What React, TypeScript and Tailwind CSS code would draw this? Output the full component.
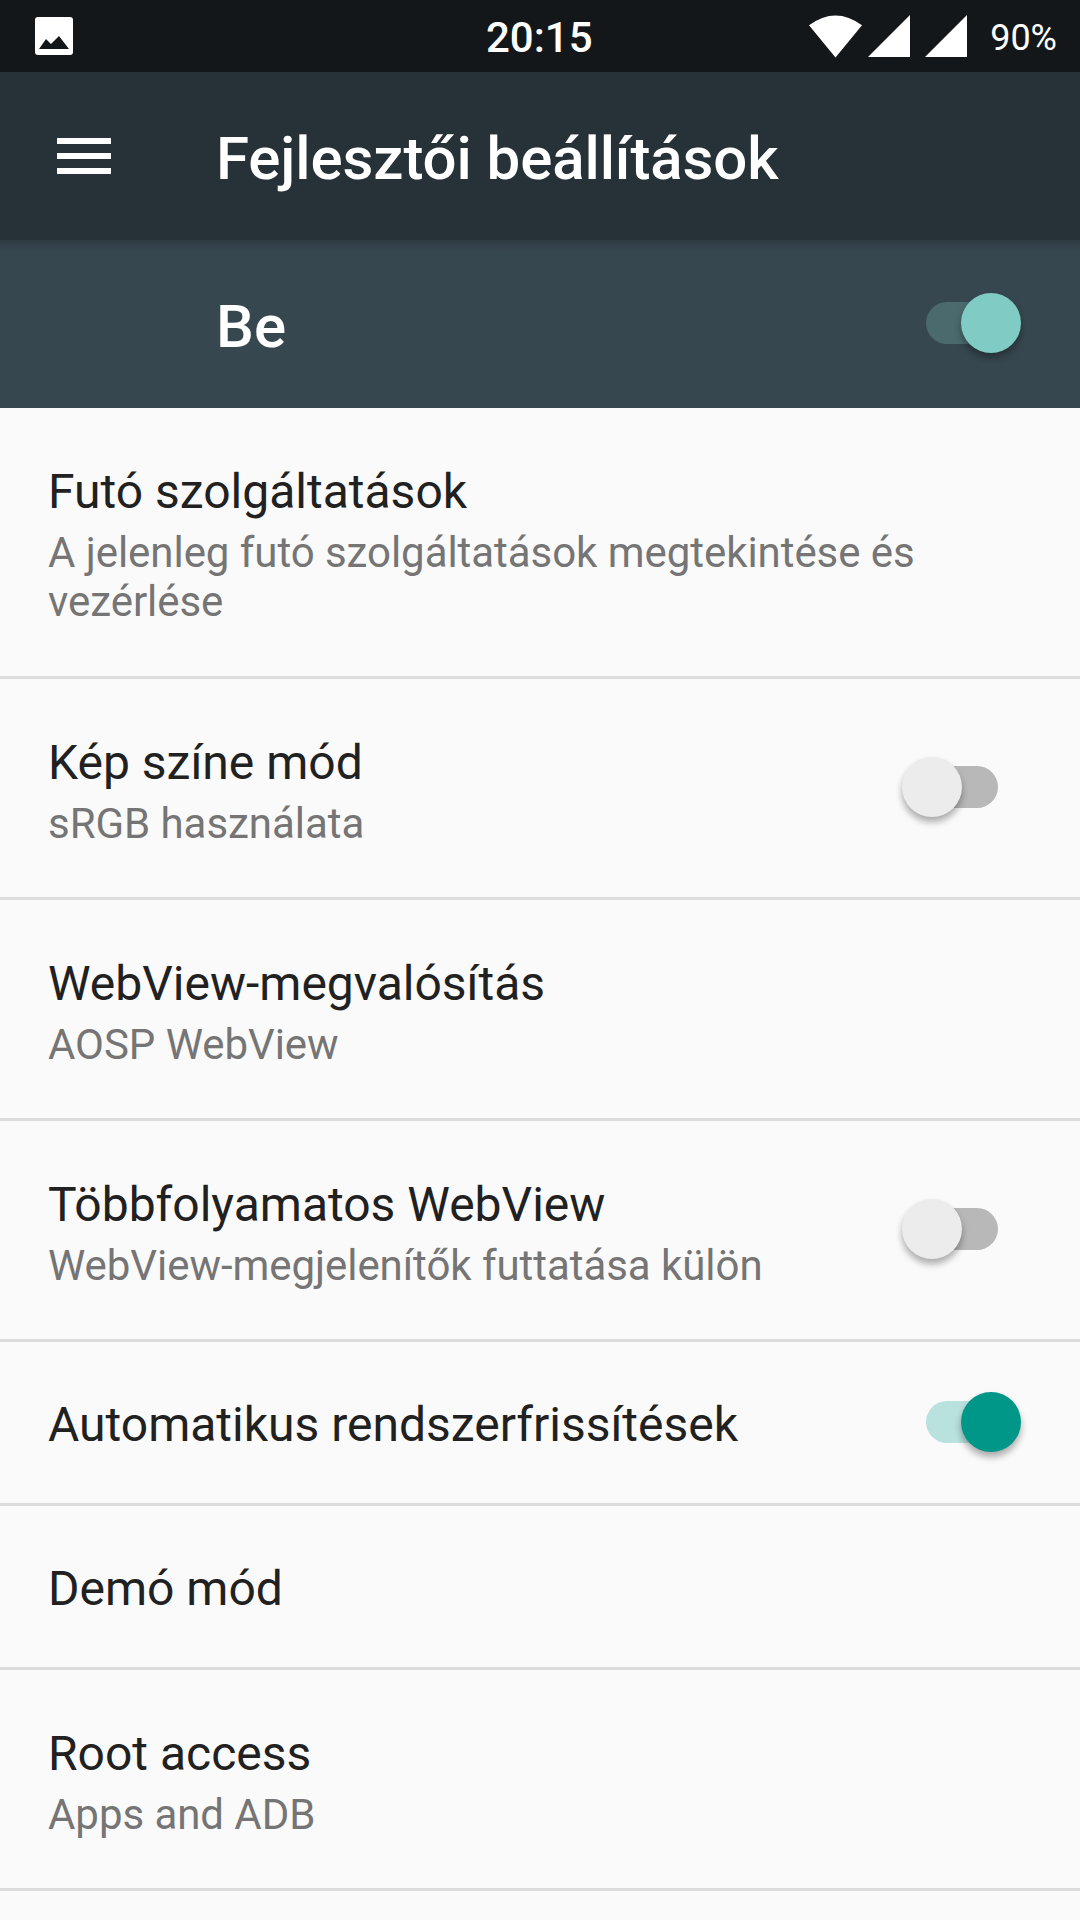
const font = { fontFamily: "Roboto, sans-serif" };

function Toggle({ on, track, thumb, shift }: { on: boolean; track: string; thumb: string; shift: string }) {
  return (
    <div className={`relative w-[72px] h-[42px] shrink-0 ${shift}`}>
      <div className={`absolute inset-0 rounded-full ${track}`} />
      <div
        className={`absolute top-[-9px] w-[60px] h-[60px] rounded-full shadow-[0_5px_7px_rgba(0,0,0,0.32)] ${thumb} ${on ? "left-[35px]" : "left-[-24px]"}`}
      />
    </div>
  );
}

function Row({
  title,
  sub,
  h,
  toggle,
}: {
  title: string;
  sub?: string[];
  h: string;
  toggle?: "on" | "off";
}) {
  return (
    <div className={`flex items-center pl-[48px] pr-[82px] border-b-[3px] border-[#dcdcdc] ${h}`}>
      <div className={`flex-1 min-w-0 ${sub ? "mt-[2px]" : "mt-[4px]"}`}>
        <div className="text-[48px] leading-[64px] text-[#212121]">{title}</div>
        {sub && (
          <div className="mt-[4px]">
            {sub.map((s) => (
              <div key={s} className="text-[42px] leading-[49px] tracking-[-0.05px] text-[#757575] whitespace-nowrap">
                {s}
              </div>
            ))}
          </div>
        )}
      </div>
      {toggle === "off" && <Toggle on={false} track="bg-[#b8b8b8]" thumb="bg-[#ececec]" shift="mt-[-2px]" />}
      {toggle === "on" && <Toggle on track="bg-[#b9e1dd]" thumb="bg-[#009688]" shift="mt-[-1px]" />}
    </div>
  );
}

export default function App() {
  return (
    <div className="w-[1080px] h-[1920px] overflow-hidden bg-[#fafafa]" style={font}>
      <div className="h-[72px] bg-[#13171a] flex items-center pl-[35px] pr-[23px] text-white">
        <div className="w-[451px] shrink-0">
          <svg width="38" height="38" viewBox="0 0 38 38" className="block">
            <path
              fill="#fff"
              fillRule="evenodd"
              d="M3 0H35a3 3 0 0 1 3 3V35a3 3 0 0 1-3 3H3a3 3 0 0 1-3-3V3a3 3 0 0 1 3-3ZM4 32H34L24 19 16 27 11 22Z"
            />
          </svg>
        </div>
        <span className="text-[42px] font-medium leading-[72px] mt-[3px]">20:15</span>
        <div className="flex items-center ml-auto">
          <svg width="53" height="43" viewBox="0 0 54 43" className="mr-[6px]">
            <path fill="#fff" d="M27 43L0 10Q27 -10 54 10Z" />
          </svg>
          <svg width="42" height="42" viewBox="0 0 43 43" className="mr-[15px]">
            <path fill="#fff" d="M43 0V43H0Z" />
          </svg>
          <svg width="42" height="42" viewBox="0 0 43 43" className="mr-[23px]">
            <path fill="#fff" d="M43 0V43H0Z" />
          </svg>
          <span className="text-[36px] leading-[72px] mt-[3px]">90%</span>
        </div>
      </div>

      <div className="h-[168px] bg-[#263238] flex items-center text-white">
        <div className="w-[217px] pl-[57px] shrink-0 flex flex-col gap-[9px]">
          <div className="w-[54px] h-[6px] bg-white" />
          <div className="w-[54px] h-[6px] bg-white" />
          <div className="w-[54px] h-[6px] bg-white" />
        </div>
        <div className="text-[60px] font-medium leading-none tracking-[-0.1px] mt-[5px] ml-[-1px]">
          Fejlesztői beállítások
        </div>
      </div>

      <div className="h-[168px] flex items-center pl-[216px] pr-[82px] text-white bg-[linear-gradient(#2f3c44,#37474f_12px)]">
        <div className="flex-1 text-[60px] font-medium leading-none mt-[5px]">Be</div>
        <Toggle on track="bg-[#4b6a6d]" thumb="bg-[#80cbc4]" shift="mt-[-2px]" />
      </div>

      <Row
        title="Futó szolgáltatások"
        sub={["A jelenleg futó szolgáltatások megtekintése és", "vezérlése"]}
        h="h-[271px]"
      />
      <Row title="Kép színe mód" sub={["sRGB használata"]} h="h-[221px]" toggle="off" />
      <Row title="WebView-megvalósítás" sub={["AOSP WebView"]} h="h-[221px]" />
      <Row title="Többfolyamatos WebView" sub={["WebView-megjelenítők futtatása külön"]} h="h-[221px]" toggle="off" />
      <Row title="Automatikus rendszerfrissítések" h="h-[164px]" toggle="on" />
      <Row title="Demó mód" h="h-[164px]" />
      <Row title="Root access" sub={["Apps and ADB"]} h="h-[221px]" />
    </div>
  );
}
